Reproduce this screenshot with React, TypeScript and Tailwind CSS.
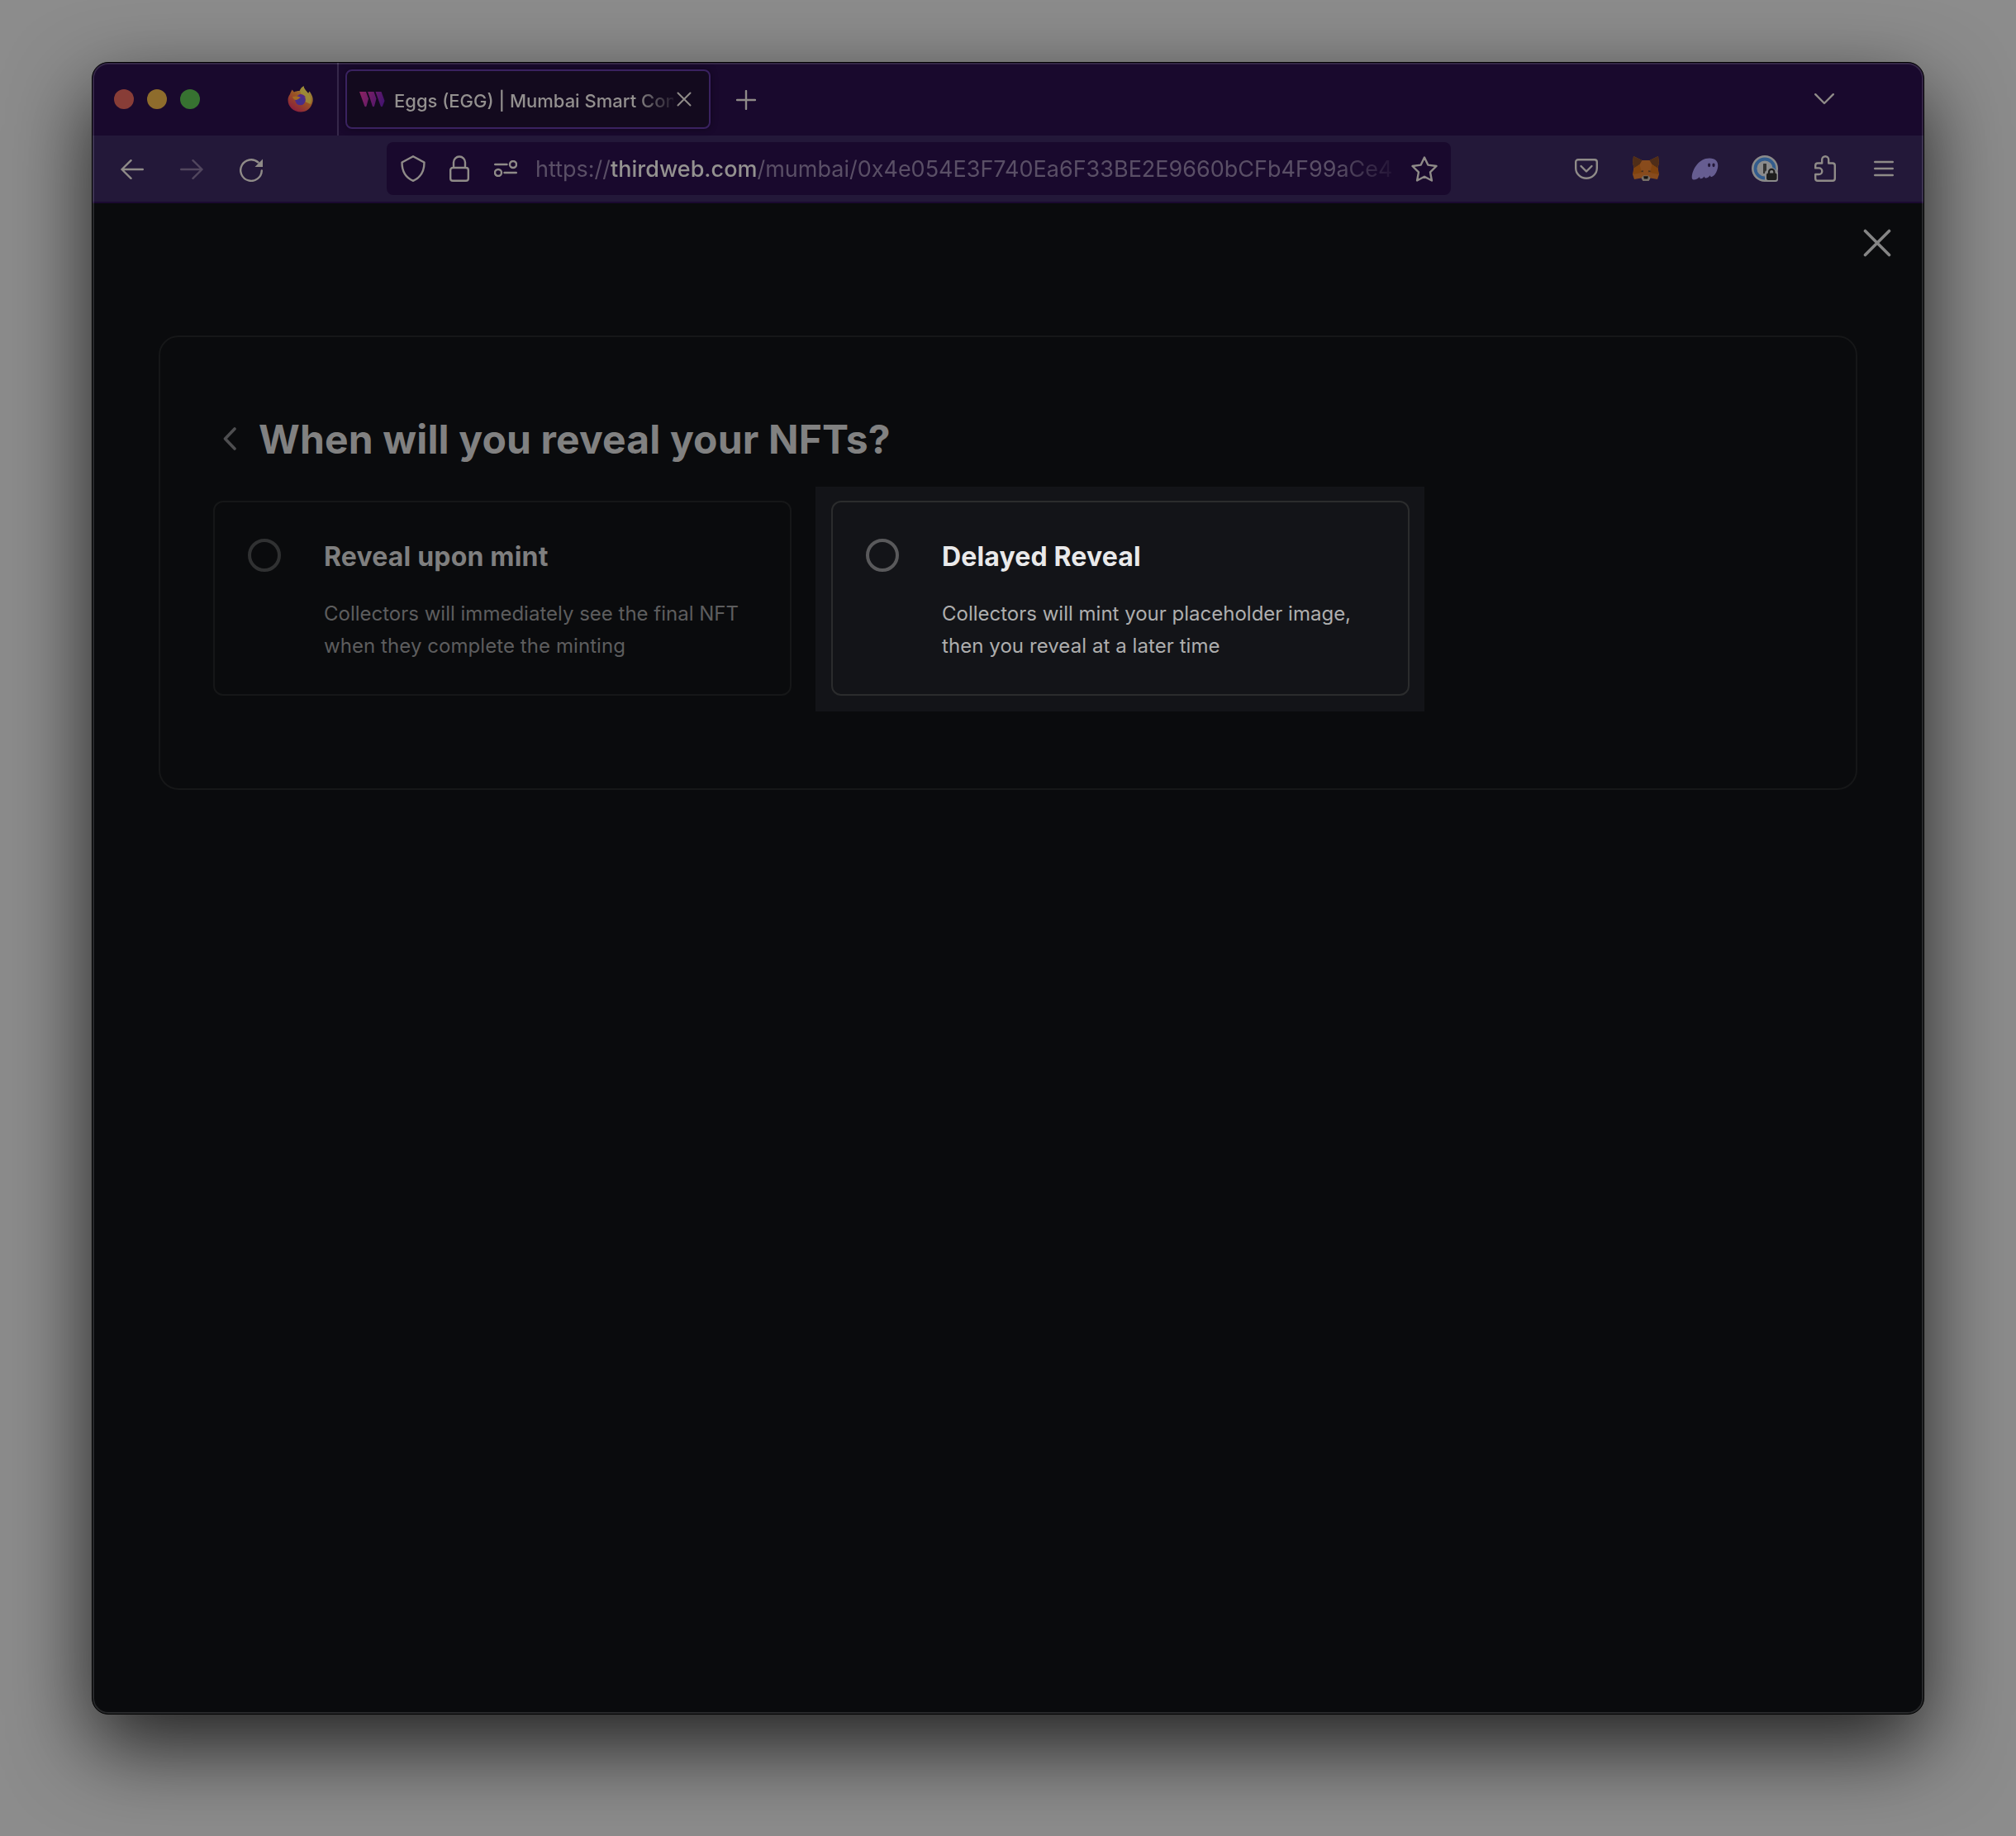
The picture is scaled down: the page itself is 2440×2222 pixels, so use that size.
import React from "react";

const ink = "#8f8b88";

function Firefox() {
  return (
    <svg width="32" height="32" viewBox="0 0 32 32">
      <defs>
        <linearGradient id="ff" x1="0.8" y1="0.1" x2="0.25" y2="0.95">
          <stop offset="0" stopColor="#9a8f3c" />
          <stop offset="0.45" stopColor="#9a5424" />
          <stop offset="1" stopColor="#8c1f3c" />
        </linearGradient>
        <radialGradient id="fg" cx="0.5" cy="0.6" r="0.6">
          <stop offset="0" stopColor="#3d3489" />
          <stop offset="1" stopColor="#542788" />
        </radialGradient>
      </defs>
      <path d="M3 10C4 7 5 6 5.500 4.500L8 7.500C9.500 6.500 12 6 14.500 6C15.500 3.500 17.500 1.500 19.500 0.300C20 4 23 6 25 9L26.500 6.500C29 10 31.500 14 30.500 19C29 27 23 31.500 16 31.500C7 31.500 0.500 25 0.500 17C0.500 14 1.500 12 3 10Z" fill="url(#ff)" />
      <path d="M19.500 0.300C14.500 3.500 14 8 18 11C21 13 22 16 21 19L28 22C30 15 27 11 24.500 8.500C22 6 20 4 19.500 0.300Z" fill="#9c8c38" opacity="0.85" />
      <circle cx="15.500" cy="17" r="6.300" fill="url(#fg)" />
      <path d="M6 13C10 12 14 12.500 16 14C14 15 12.500 16.500 10.500 17C8 17 6.500 15 6 13Z" fill="#a36a22" />
      <path d="M13 10.500C16 9 20.500 10.500 22 14L18.500 12.500Z" fill="#542788" />
    </svg>
  );
}

function ThirdwebMark() {
  return (
    <svg width="31" height="19" viewBox="0 0 31 19">
      <defs>
        <linearGradient id="tw" gradientUnits="userSpaceOnUse" x1="0" y1="0" x2="31" y2="12">
          <stop offset="0" stopColor="#8c2361" />
          <stop offset="1" stopColor="#431370" />
        </linearGradient>
      </defs>
      <g fill="url(#tw)">
        <path d="M0 0H8L11 8.500L8.500 17.500Q7.500 19 6.300 17.500Z" />
        <path d="M10 0H17.500L20.500 8.500L18 17.500Q17 19 15.800 17.500L12.500 7Z" />
        <path d="M19.500 0H26.500L30.500 11L28 17.500Q27 19 25.800 17.500L22 7Z" />
      </g>
    </svg>
  );
}

function Fox() {
  return (
    <svg width="32" height="30" viewBox="0 0 32 30">
      <path d="M1 0L11.500 5H20.500L31 0L32 8L30.500 14L32 22L30 28L21.500 26.500L19.500 30H12.500L10.500 26.500L2 28L0 22L1.500 14L0 8Z" fill="#884b1c" />
      <path d="M1 0L11.500 5L8.500 10L2 14.500L0 8ZM31 0L20.500 5L23.500 10L30 14.500L32 8Z" fill="#4f2d18" />
      <path d="M1.500 14.500L8.500 10L11 20L0.500 22ZM30.500 14.500L23.500 10L21 20L31.500 22Z" fill="#80430f" />
      <path d="M9.500 18L13 17.300L12.500 19.600ZM22.500 18L19 17.300L19.500 19.600Z" fill="#3a2a20" />
      <path d="M10.500 26.500L13 23.500H19L21.500 26.500L19.500 30H12.500Z" fill="#77706a" />
      <path d="M13.200 24.300H18.800L18.200 27.500H13.800Z" fill="#17130f" />
    </svg>
  );
}

function Phantom() {
  return (
    <svg width="33" height="27" viewBox="0 0 33 27">
      <path d="M0.700 23.500C1.200 14 9 0.500 22 0.500C29 0.500 33 4.500 32.200 11C31.300 17.500 27.500 22.500 24.700 23C23.300 23.200 22.900 22.200 22.700 21.300C21.500 23 19.500 24.700 17.500 24.600C16.300 24.500 15.900 23.500 15.900 22.500C14.500 24.200 12.800 25.500 11.300 25.300C10.300 25.100 10 24.200 10.200 23C8.500 25 5.500 26.600 3 26.500C1.200 26.400 0.600 25 0.700 23.500Z" fill="#665d91" />
      <ellipse cx="21.600" cy="8.800" rx="1.600" ry="2.400" fill="#231839" />
      <ellipse cx="27" cy="8.800" rx="1.600" ry="2.400" fill="#231839" />
    </svg>
  );
}

function OnePassword() {
  return (
    <svg width="32" height="32" viewBox="0 0 32 32">
      <circle cx="16" cy="16" r="16" fill="#8b8b8b" />
      <circle cx="16" cy="16" r="11.500" fill="none" stroke="#325c8e" strokeWidth="3.800" />
      <rect x="14" y="10" width="4" height="12" rx="0.500" fill="#333" />
      <path d="M16 22a4 4 0 0 1 3-4a5.500 5.500 0 0 1 10 0a4 4 0 0 1 3 4v7a3 3 0 0 1-3 3H19a3 3 0 0 1-3-3Z" fill="#8b8b8b" />
      <rect x="18" y="21.500" width="12.500" height="8.500" rx="2" fill="#1d1d1d" />
      <path d="M21 22v-2a3.200 3.200 0 0 1 6.400 0v2" fill="none" stroke="#1d1d1d" strokeWidth="2.200" />
    </svg>
  );
}

function Line({ w, h, d, c = ink, s = 2.4 }: { w: number; h: number; d: string; c?: string; s?: number }) {
  return (
    <svg width={w} height={h} viewBox={`0 0 ${w} ${h}`} fill="none" stroke={c} strokeWidth={s} strokeLinecap="round" strokeLinejoin="round" className="shrink-0">
      <path d={d} />
    </svg>
  );
}

function TabBar() {
  return (
    <div className="flex h-[88px] items-center bg-[#19092d]">
      <div className="ml-[26px] flex gap-4">
        <div className="size-6 rounded-full bg-[#883d37]" />
        <div className="size-6 rounded-full bg-[#8e6c2c]" />
        <div className="size-6 rounded-full bg-[#377231]" />
      </div>
      <div className="ml-[106px]"><Firefox /></div>
      <div className="ml-[28px] h-full w-[2px] bg-[#36284a]" />
      <div className="ml-2 flex h-[72px] w-[442px] items-center rounded-lg border-2 border-[#3a2260] bg-[#130a1e] pl-[15px] shadow-[0_0_8px_rgba(0,0,0,0.4)]">
        <ThirdwebMark />
        <div className="ml-[11px] mt-1 w-[338px] whitespace-nowrap text-[22px] font-medium leading-8 text-[#93908f] [mask-image:linear-gradient(to_right,black_290px,transparent_345px)]">
          Eggs (EGG) | Mumbai Smart Con
        </div>
        <div className="ml-[4px]"><Line w={18} h={18} s={2} d="M1.500 1.500L16.500 16.500M16.500 1.500L1.500 16.500" /></div>
      </div>
      <div className="ml-[31px] mt-[2px]"><Line w={24} h={24} d="M12 1V23M1 12H23" /></div>
      <div className="ml-auto mr-[108px]"><Line w={24} h={14} d="M1.200 1.200L12 12L22.800 1.200" /></div>
    </div>
  );
}

function Toolbar() {
  return (
    <div className="flex h-[82px] items-center border-b-2 border-[#1b0a31] bg-[#231839] pl-[34px] pr-[36px]">
      <div className="flex w-[172px] items-center gap-11">
        <div className="mt-[2px]"><Line w={28} h={24} d="M26.800 12H1.500M12.500 1.200L1.500 12L12.500 22.800" /></div>
        <div className="mt-[2px]"><Line w={28} h={24} c="#51465e" d="M1.200 12H26.500M15.500 1.200L26.500 12L15.500 22.800" /></div>
        <svg width="28" height="28" viewBox="0 0 28 28" className="mt-1 shrink-0">
          <path d="M26.800 14.500A12.800 12.800 0 1 1 22.500 4.500" fill="none" stroke={ink} strokeWidth="2.400" strokeLinecap="round" />
          <path d="M28 0.500V10H18.500Z" fill={ink} />
        </svg>
      </div>
      <div className="ml-[150px] flex h-16 w-[1288px] items-center rounded-lg bg-[#19092d] pl-[17px] pr-4">
        <Line w={30} h={32} d="M15 1.200L28.500 8.500C28.500 19 24 27 15 30.800C6 27 1.500 19 1.500 8.500Z" />
        <div className="ml-[29px]"><Line w={24} h={32} d="M5 15V8.500a7 7 0 0 1 14 0V15M4 15H20a2.800 2.800 0 0 1 2.800 2.800V28a2.800 2.800 0 0 1-2.800 2.800H4A2.800 2.800 0 0 1 1.200 28V17.800A2.800 2.800 0 0 1 4 15Z" /></div>
        <div className="ml-[30px]"><Line w={28} h={20} d="M1.200 5H15.500M27 5a4 4 0 1 1-8 0a4 4 0 1 1 8 0M12.500 15H26.800M9 15a4 4 0 1 1-8 0a4 4 0 1 1 8 0" /></div>
        <div className="ml-[22px] mt-[2px] w-[1044px] whitespace-nowrap text-[27px] leading-9 text-[#5a4f66] [mask-image:linear-gradient(to_right,black_970px,transparent_1050px)]">
          https://<span className="font-medium text-[#949290]">thirdweb.com</span>/mumbai/0x4e054E3F740Ea6F33BE2E9660bCFb4F99aCe4
        </div>
        <div className="ml-auto"><Line w={32} h={31} d="M16 1.500L20.300 10.600L30.500 12L23 19.300L24.900 29.500L16 24.700L7.100 29.500L9 19.300L1.500 12L11.700 10.600Z" /></div>
      </div>
      <div className="ml-auto flex items-center">
        <Line w={28} h={25} d="M4 1.200H24A2.800 2.800 0 0 1 26.800 4V11.500A12.800 12.300 0 0 1 1.200 11.500V4A2.800 2.800 0 0 1 4 1.200ZM7.500 9L14 15.500L20.500 9" />
        <div className="ml-[42px]"><Fox /></div>
        <div className="ml-[39px]"><Phantom /></div>
        <div className="ml-[40px]"><OnePassword /></div>
        <div className="ml-[44px]"><Line w={26} h={32} d="M4 9.500H9.200V5.200a4 4 0 0 1 8 0V9.500H22A2.800 2.800 0 0 1 24.800 12.300V28A2.800 2.800 0 0 1 22 30.800H4A2.800 2.800 0 0 1 1.200 28V23H5.500a3.800 3.800 0 0 0 0-7.600H1.200V12.300A2.800 2.800 0 0 1 4 9.500Z" /></div>
        <div className="ml-[46px]"><Line w={24} h={20} d="M1.200 2H22.800M1.200 10H22.800M1.200 18H22.800" /></div>
      </div>
    </div>
  );
}

function Option({ title, lines, active }: { title: string; lines: string[]; active?: boolean }) {
  return (
    <div className={active
      ? "flex h-[236px] w-[700px] rounded-xl border-2 border-[#2b2c2d] bg-[#131418] pl-10 pt-11"
      : "flex h-[236px] w-[700px] rounded-xl border-2 border-[#161718] pl-10 pt-11"}>
      <div className={active ? "size-10 shrink-0 rounded-full border-4 border-[#59595b]" : "size-10 shrink-0 rounded-full border-4 border-[#303132]"} />
      <div className="ml-[52px]">
        <div className={active ? "mt-[2px] text-[32px] font-bold leading-10 tracking-[0.15px] text-[#e9e9ea]" : "mt-[2px] text-[32px] font-bold leading-10 tracking-[0.18px] text-[#7f7f7f]"}>{title}</div>
        <div className={active ? "mt-[29px] whitespace-nowrap text-2xl leading-[39px] text-[#aeaeae]" : "mt-[29px] whitespace-nowrap text-2xl leading-[39px] text-[#5d5d5e]"}>
          <div>{lines[0]}</div>
          <div className="tracking-[0.07px]">{lines[1]}</div>
        </div>
      </div>
    </div>
  );
}

export default function App() {
  return (
    <div className="h-[2222px] w-[2440px] overflow-hidden bg-[#8c8c8c] pl-[111px] pt-[75px] font-['Inter',sans-serif]">
      <div className="relative h-[2000px] w-[2218px] overflow-hidden rounded-[20px] border border-black bg-[#0a0b0d] shadow-[0_38px_100px_rgba(0,0,0,0.76)]">
        <TabBar />
        <Toolbar />
        <div className="flex justify-end pr-[39px] pt-[31px]">
          <Line w={34} h={34} s={3.6} c="#858585" d="M2.500 2.500L31.500 31.500M31.500 2.500L2.500 31.500" />
        </div>
        <div className="ml-20 mt-[95px] h-[550px] w-[2056px] rounded-3xl border-2 border-[#161718] px-16 pt-[92px]">
          <div className="flex h-[64px] items-center">
            <div className="-mt-[2px] ml-3"><Line w={16} h={28} s={3.6} c="#4e4e50" d="M14 2L2.500 14L14 26" /></div>
            <h1 className="ml-[27px] text-[48px] font-bold leading-[64px] tracking-[0.15px] text-[#818181]">When will you reveal your NFTs?</h1>
          </div>
          <div className="mt-[42px] flex gap-12">
            <Option title="Reveal upon mint" lines={["Collectors will immediately see the final NFT", "when they complete the minting"]} />
            <div className="-mx-[19px] -my-[17px] h-[272px] w-[737px] bg-[#131418] pl-[19px] pt-[17px]">
              <Option active title="Delayed Reveal" lines={["Collectors will mint your placeholder image,", "then you reveal at a later time"]} />
            </div>
          </div>
        </div>
        <div className="pointer-events-none absolute inset-0 rounded-[19px] border-2 border-white/12" />
      </div>
    </div>
  );
}
